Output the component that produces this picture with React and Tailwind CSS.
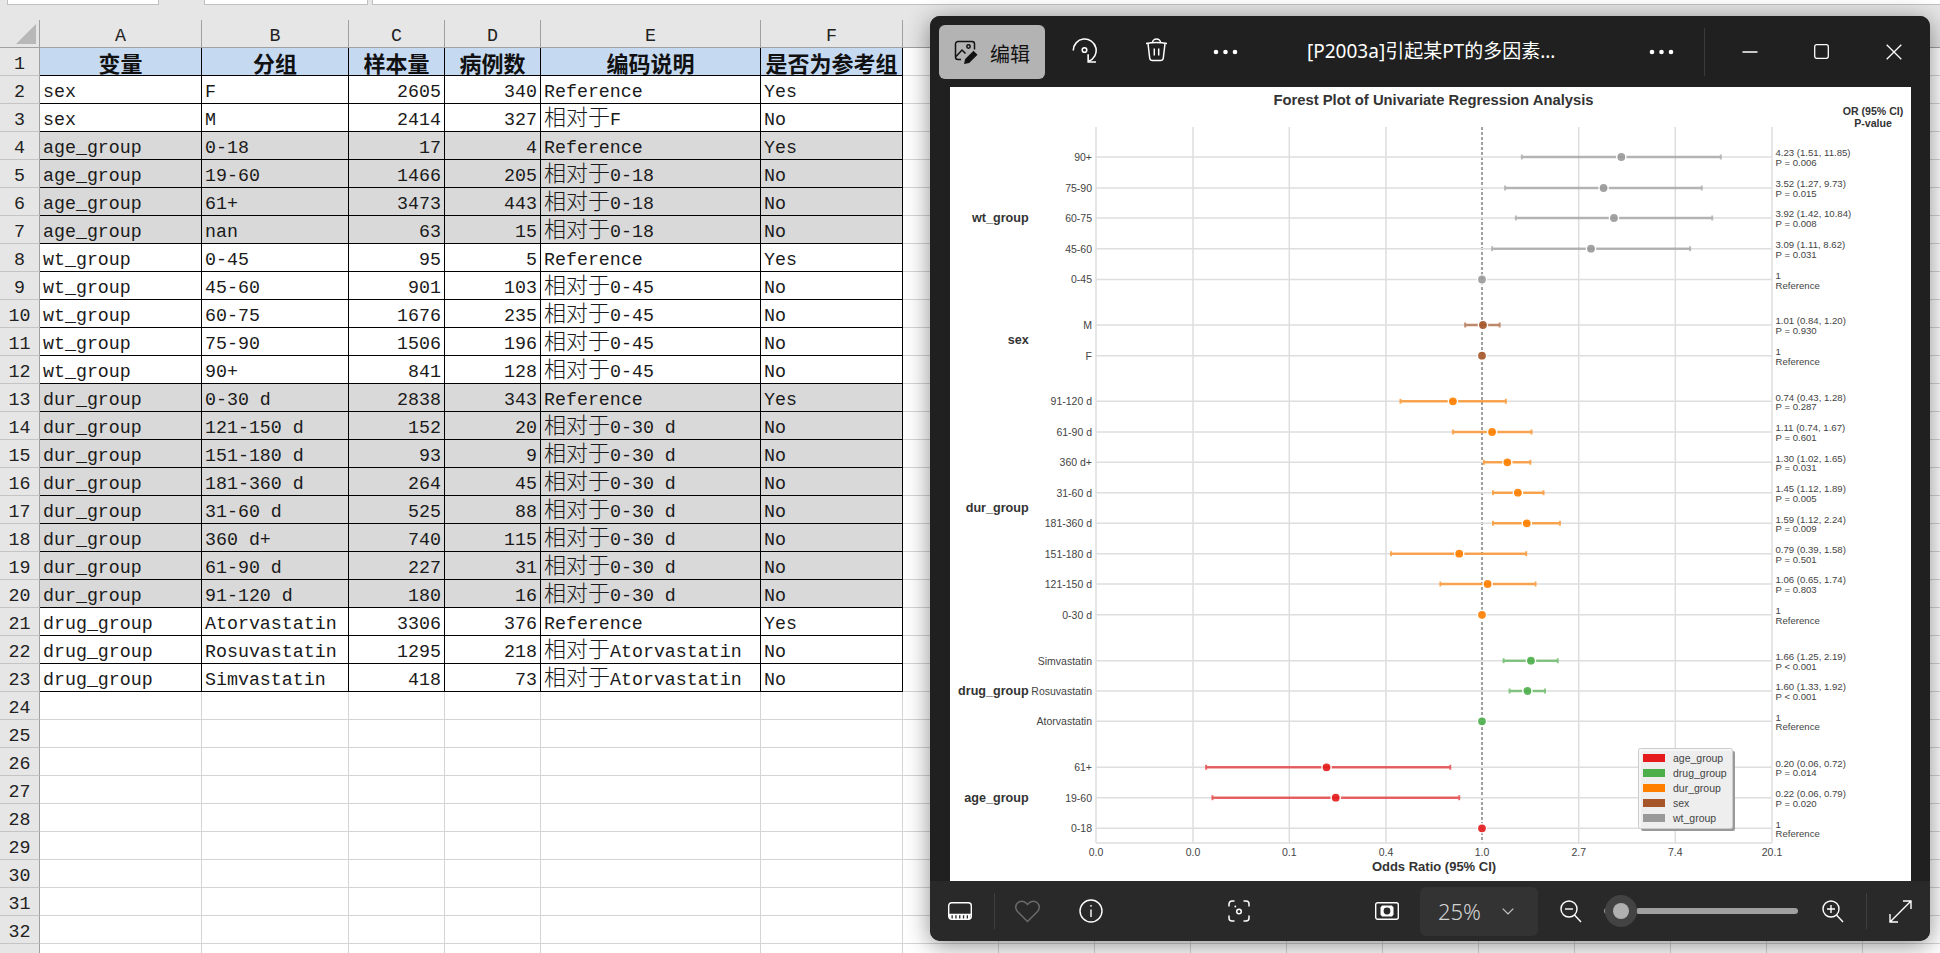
const COLS = [162, 147, 96, 96, 220, 142];
const EXTRA = Array.from({ length: 11 }, () => 96);
const LETTERS = ["A", "B", "C", "D", "E", "F"];

const HEAD = ["变量", "分组", "样本量", "病例数", "编码说明", "是否为参考组"];
const ROWS = [
  ["sex", "F", 2605, 340, "Reference", "Yes"],
  ["sex", "M", 2414, 327, "相对于F", "No"],
  ["age_group", "0-18", 17, 4, "Reference", "Yes"],
  ["age_group", "19-60", 1466, 205, "相对于0-18", "No"],
  ["age_group", "61+", 3473, 443, "相对于0-18", "No"],
  ["age_group", "nan", 63, 15, "相对于0-18", "No"],
  ["wt_group", "0-45", 95, 5, "Reference", "Yes"],
  ["wt_group", "45-60", 901, 103, "相对于0-45", "No"],
  ["wt_group", "60-75", 1676, 235, "相对于0-45", "No"],
  ["wt_group", "75-90", 1506, 196, "相对于0-45", "No"],
  ["wt_group", "90+", 841, 128, "相对于0-45", "No"],
  ["dur_group", "0-30 d", 2838, 343, "Reference", "Yes"],
  ["dur_group", "121-150 d", 152, 20, "相对于0-30 d", "No"],
  ["dur_group", "151-180 d", 93, 9, "相对于0-30 d", "No"],
  ["dur_group", "181-360 d", 264, 45, "相对于0-30 d", "No"],
  ["dur_group", "31-60 d", 525, 88, "相对于0-30 d", "No"],
  ["dur_group", "360 d+", 740, 115, "相对于0-30 d", "No"],
  ["dur_group", "61-90 d", 227, 31, "相对于0-30 d", "No"],
  ["dur_group", "91-120 d", 180, 16, "相对于0-30 d", "No"],
  ["drug_group", "Atorvastatin", 3306, 376, "Reference", "Yes"],
  ["drug_group", "Rosuvastatin", 1295, 218, "相对于Atorvastatin", "No"],
  ["drug_group", "Simvastatin", 418, 73, "相对于Atorvastatin", "No"],
];

const COLOR = { age: "#e41a1c", drug: "#4daf4a", dur: "#ff7f00", sex: "#a65628", wt: "#999999" };

// y, label, group, or, lo, hi, text, p
const PLOT = [
  [157, "90+", "wt", 4.23, 1.51, 11.85, "4.23 (1.51, 11.85)", "P = 0.006"],
  [188, "75-90", "wt", 3.52, 1.27, 9.73, "3.52 (1.27, 9.73)", "P = 0.015"],
  [218, "60-75", "wt", 3.92, 1.42, 10.84, "3.92 (1.42, 10.84)", "P = 0.008"],
  [248.7, "45-60", "wt", 3.09, 1.11, 8.62, "3.09 (1.11, 8.62)", "P = 0.031"],
  [279.5, "0-45", "wt", 1, 1, 1, "1", "Reference"],
  [325, "M", "sex", 1.01, 0.84, 1.2, "1.01 (0.84, 1.20)", "P = 0.930"],
  [355.7, "F", "sex", 1, 1, 1, "1", "Reference"],
  [401.3, "91-120 d", "dur", 0.74, 0.43, 1.28, "0.74 (0.43, 1.28)", "P = 0.287"],
  [432, "61-90 d", "dur", 1.11, 0.74, 1.67, "1.11 (0.74, 1.67)", "P = 0.601"],
  [462.3, "360 d+", "dur", 1.3, 1.02, 1.65, "1.30 (1.02, 1.65)", "P = 0.031"],
  [492.7, "31-60 d", "dur", 1.45, 1.12, 1.89, "1.45 (1.12, 1.89)", "P = 0.005"],
  [523.3, "181-360 d", "dur", 1.59, 1.12, 2.24, "1.59 (1.12, 2.24)", "P = 0.009"],
  [553.7, "151-180 d", "dur", 0.79, 0.39, 1.58, "0.79 (0.39, 1.58)", "P = 0.501"],
  [584, "121-150 d", "dur", 1.06, 0.65, 1.74, "1.06 (0.65, 1.74)", "P = 0.803"],
  [614.8, "0-30 d", "dur", 1, 1, 1, "1", "Reference"],
  [660.7, "Simvastatin", "drug", 1.66, 1.25, 2.19, "1.66 (1.25, 2.19)", "P < 0.001"],
  [691, "Rosuvastatin", "drug", 1.6, 1.33, 1.92, "1.60 (1.33, 1.92)", "P < 0.001"],
  [721.3, "Atorvastatin", "drug", 1, 1, 1, "1", "Reference"],
  [767.3, "61+", "age", 0.2, 0.0575, 0.72, "0.20 (0.06, 0.72)", "P = 0.014"],
  [797.7, "19-60", "age", 0.22, 0.0614, 0.79, "0.22 (0.06, 0.79)", "P = 0.020"],
  [828.3, "0-18", "age", 1, 1, 1, "1", "Reference"],
];

const GROUPS = [
  ["wt_group", 217.5],
  ["sex", 339],
  ["dur_group", 507],
  ["drug_group", 690.7],
  ["age_group", 797],
];

const TICKS = [
  [1096, "0.0"],
  [1193, "0.0"],
  [1289.3, "0.1"],
  [1386, "0.4"],
  [1482, "1.0"],
  [1578.7, "2.7"],
  [1675.3, "7.4"],
  [1772, "20.1"],
];

const LEGEND = [
  ["age_group", "age"],
  ["drug_group", "drug"],
  ["dur_group", "dur"],
  ["sex", "sex"],
  ["wt_group", "wt"],
];

const xOf = (or) => 1482 + 96.6 * Math.log(or);

// CJK runs get a larger size so that they stay full-width next to the mono latin
function Mixed({ text }) {
  return String(text)
    .split(/([\u4e00-\u9fff]+)/)
    .map((part, i) =>
      /[\u4e00-\u9fff]/.test(part) ? (
        <span key={i} className="font-['Noto_Sans_CJK_SC',sans-serif] text-[22px] leading-[0] font-light">
          {part}
        </span>
      ) : (
        <span key={i}>{part}</span>
      )
    );
}

function RowNumber({ n }) {
  return (
    <div className="flex h-[28px] w-[40px] shrink-0 items-end justify-center border-r border-b border-r-[#a0a0a0] border-b-[#c4c4c4] bg-[#e6e6e6] text-[18.3px] leading-[22px] text-[#222]">
      {n}
    </div>
  );
}

function DataRow({ n, row, gray }) {
  return (
    <div className="flex">
      <RowNumber n={n} />
      {row.map((value, i) => (
        <div
          key={i}
          style={{ width: COLS[i] }}
          className={`flex h-[28px] shrink-0 items-end whitespace-nowrap border-r border-b border-black text-[18.3px] leading-[21px] text-[#1a1a1a] ${
            gray ? "bg-[#d9d9d9]" : "bg-white"
          } ${i === 2 || i === 3 ? "justify-end pr-[3px]" : "pl-[3px]"}`}
        >
          <span>
            <Mixed text={value} />
          </span>
        </div>
      ))}
      {EXTRA.map((w, i) => (
        <div key={i} style={{ width: w }} className="h-[28px] shrink-0 border-r border-b border-[#d4d4d4] bg-white" />
      ))}
    </div>
  );
}

function Sheet() {
  const blank = Array.from({ length: 10 }, (_, i) => i + 24);
  return (
    <div className="h-[953px] w-[1940px] overflow-hidden bg-white font-['Liberation_Mono','Noto_Sans_CJK_SC',monospace]">
      <div className="flex h-[20px] items-start bg-[#e6e6e6]">
        <div className="ml-[7px] h-[5px] w-[152px] border-x border-b border-[#c0c0c0] bg-white" />
        <div className="ml-[45px] h-[5px] w-[164px] border-x border-b border-[#c0c0c0] bg-white" />
        <div className="ml-[4px] h-[5px] flex-1 border-l border-b border-[#c0c0c0] bg-white" />
      </div>
      <div className="flex h-[28px] bg-[#e6e6e6]">
        <div className="flex h-[28px] w-[40px] shrink-0 items-start justify-end border-r border-b border-[#a0a0a0] pt-[4px] pr-[3px]">
          <svg width="20" height="20" viewBox="0 0 20 20">
            <polygon points="0,20 20,20 20,0" fill="#b8b8b8" />
          </svg>
        </div>
        {COLS.map((w, i) => (
          <div
            key={i}
            style={{ width: w }}
            className="flex h-[28px] shrink-0 items-end justify-center border-r border-b border-[#a0a0a0] text-[18.3px] leading-[22px] text-[#222]"
          >
            {LETTERS[i]}
          </div>
        ))}
        {EXTRA.map((w, i) => (
          <div key={i} style={{ width: w }} className="h-[28px] shrink-0 border-b border-[#a0a0a0]" />
        ))}
      </div>
      <div className="flex">
        <RowNumber n={1} />
        {HEAD.map((h, i) => (
          <div
            key={i}
            style={{ width: COLS[i] }}
            className="flex h-[28px] shrink-0 items-center justify-center border-r border-b border-black bg-[#c5d9f1] font-['Noto_Sans_CJK_SC',sans-serif] text-[22px] leading-[26px] font-bold whitespace-nowrap text-[#111]"
          >
            {h}
          </div>
        ))}
        {EXTRA.map((w, i) => (
          <div key={i} style={{ width: w }} className="h-[28px] shrink-0 border-r border-b border-[#d4d4d4] bg-white" />
        ))}
      </div>
      {ROWS.map((row, i) => (
        <DataRow key={i} n={i + 2} row={row} gray={row[0] === "age_group" || row[0] === "dur_group"} />
      ))}
      {blank.map((n) => (
        <div key={n} className="flex">
          <RowNumber n={n} />
          {[...COLS, ...EXTRA].map((w, i) => (
            <div key={i} style={{ width: w }} className="h-[28px] shrink-0 border-r border-b border-[#d4d4d4] bg-white" />
          ))}
        </div>
      ))}
    </div>
  );
}

function ForestPlot() {
  const sans = "'Liberation Sans', Arial, sans-serif";
  return (
    <svg className="block h-[794px] w-[961px]" viewBox="950 87 961 794" fontFamily={sans}>
      <rect x="950" y="87" width="961" height="794" fill="#fff" />
      <text x="1433.5" y="105" textAnchor="middle" fontSize="14.8" fontWeight="700" fill="#333">
        Forest Plot of Univariate Regression Analysis
      </text>
      <text x="1873" y="115" textAnchor="middle" fontSize="10.6" fontWeight="700" fill="#333">
        OR (95% CI)
      </text>
      <text x="1873" y="127" textAnchor="middle" fontSize="10.6" fontWeight="700" fill="#333">
        P-value
      </text>

      {TICKS.map(([x, label]) => (
        <g key={x}>
          <line
            x1={x}
            x2={x}
            y1="127"
            y2="843"
            stroke={label === "1.0" ? "#444" : "#dedede"}
            strokeWidth={label === "1.0" ? 1 : 1.5}
            strokeDasharray={label === "1.0" ? "3 2" : undefined}
          />
          <text x={x} y="855.5" textAnchor="middle" fontSize="10.5" fill="#444">
            {label}
          </text>
        </g>
      ))}
      <line x1="1096" x2="1772" y1="843" y2="843" stroke="#dedede" strokeWidth="1.5" />
      <text x="1434" y="871" textAnchor="middle" fontSize="13" fontWeight="700" fill="#333">
        Odds Ratio (95% CI)
      </text>

      {GROUPS.map(([label, y]) => (
        <text key={label} x="1028.7" y={y + 4.5} textAnchor="end" fontSize="12.6" fontWeight="700" fill="#333">
          {label}
        </text>
      ))}

      {PLOT.map(([y, label, group, or, lo, hi, text, p]) => {
        const color = COLOR[group];
        return (
          <g key={label}>
            <line x1="1096" x2="1772" y1={y} y2={y} stroke="#dedede" strokeWidth="1.5" />
            {or !== 1 || lo !== 1 ? (
              <g stroke={color} opacity="0.65">
                <line x1={xOf(lo)} x2={xOf(hi)} y1={y} y2={y} strokeWidth="2.5" />
                <line x1={xOf(lo)} x2={xOf(lo)} y1={y - 2.5} y2={y + 2.5} strokeWidth="2" />
                <line x1={xOf(hi)} x2={xOf(hi)} y1={y - 2.5} y2={y + 2.5} strokeWidth="2" />
              </g>
            ) : null}
            <circle cx={xOf(or)} cy={y} r="4.6" fill={color} fillOpacity="0.9" stroke="#fff" strokeWidth="1.4" />
            <text x="1092" y={y + 3.8} textAnchor="end" fontSize="10.5" fill="#444">
              {label}
            </text>
            <text x="1775.5" y={y - 0.7} fontSize="9.6" fill="#444">
              {text}
            </text>
            <text x="1775.5" y={y + 9} fontSize="9.6" fill="#444">
              {p}
            </text>
          </g>
        );
      })}

      <rect x="1641" y="751" width="94" height="80" rx="2" fill="#999" />
      <rect x="1638.5" y="748.5" width="94" height="80" rx="2" fill="#f5f5f5" fillOpacity="0.92" stroke="#ccc" />
      {LEGEND.map(([label, key], i) => (
        <g key={label}>
          <rect x="1643" y={754 + i * 15} width="22" height="8" fill={COLOR[key]} />
          <text x="1673" y={762 + i * 15} fontSize="10.5" fill="#444">
            {label}
          </text>
        </g>
      ))}
    </svg>
  );
}

function Dots() {
  return (
    <svg width="25" height="6" viewBox="0 0 25 6" fill="#fff">
      <circle cx="3" cy="3" r="2.3" />
      <circle cx="12.5" cy="3" r="2.3" />
      <circle cx="22" cy="3" r="2.3" />
    </svg>
  );
}

function TopBar() {
  return (
    <div className="flex h-[71px] shrink-0 items-center bg-[#202020] pl-[9px] text-white">
      <div className="flex h-[54px] w-[106px] items-center rounded-[6px] bg-[#b3b3b3] pl-[15px] text-[#111]">
        <svg className="mt-[2px]" width="26" height="25" viewBox="0 0 26 25" fill="none" stroke="#111" strokeWidth="1.5">
          <path d="M20.5 9.5V4A2.5 2.5 0 0 0 18 1.5H4A2.5 2.5 0 0 0 1.5 4V17A2.5 2.5 0 0 0 4 19.5H7" />
          <path d="M2 16.5l6-6.5 3.5 3.5" />
          <circle cx="14.5" cy="6.5" r="1.7" />
          <path d="M10 24l1.2-5 8.3-8.3 4 4-8.3 8.3z" fill="#111" stroke="none" />
        </svg>
        <span className="mt-[4px] ml-[10px] font-['Noto_Sans_CJK_SC',sans-serif] text-[20px] leading-none">编辑</span>
      </div>
      <svg className="mb-[3px] ml-[27px]" width="25" height="25" viewBox="0 0 24 24" fill="none" stroke="#fff" strokeWidth="1.5">
        <path d="M1.2 12A11 11 0 1 1 16 22.3" />
        <path d="M23 23H15.5V15.7" />
        <circle cx="12" cy="11.5" r="2.2" />
      </svg>
      <svg className="mb-[3px] ml-[48px]" width="23" height="24" viewBox="0 0 23 24" fill="none" stroke="#fff" strokeWidth="1.5">
        <path d="M1 5.5C7 4.3 16 4.3 22 5.5" />
        <path d="M7.5 4.5a4 3.5 0 0 1 8 0" />
        <path d="M3 5.5L4.7 20a3 3 0 0 0 3 2.6h7.6a3 3 0 0 0 3-2.6L20 5.5" />
        <path d="M9.3 10.5v7M13.7 10.5v7" />
      </svg>
      <div className="ml-[45px]">
        <Dots />
      </div>
      <span className="ml-[69px] w-[342px] font-['Noto_Sans','Noto_Sans_CJK_SC',sans-serif] text-[19px] whitespace-nowrap">
        [P2003a]引起某PT的多因素...
      </span>
      <Dots />
      <div className="ml-[30px] h-[48px] w-px bg-[#3a3a3a]" />
      <svg className="ml-[37px]" width="16" height="16" viewBox="0 0 16 16" stroke="#fff" strokeWidth="1.3">
        <path d="M0.5 8H15.5" />
      </svg>
      <svg className="ml-[56px]" width="15" height="15" viewBox="0 0 15 15" fill="none" stroke="#fff" strokeWidth="1.3">
        <rect x="0.7" y="0.7" width="13.6" height="13.6" rx="2" />
      </svg>
      <svg className="ml-[57px]" width="16" height="16" viewBox="0 0 16 16" stroke="#fff" strokeWidth="1.3">
        <path d="M0.7 0.7L15.3 15.3M15.3 0.7L0.7 15.3" />
      </svg>
    </div>
  );
}

function BottomBar() {
  return (
    <div className="flex h-[60px] shrink-0 items-center rounded-b-[10px] bg-[#292929] pl-[18px] text-white">
      <svg width="24" height="18" viewBox="0 0 24 18" fill="none" stroke="#fff" strokeWidth="1.4">
        <rect x="0.7" y="0.7" width="22.6" height="16.6" rx="3" />
        <path d="M1 12.5H23" />
        <path d="M1 15H23" strokeWidth="4" strokeDasharray="2.5 1.3" />
      </svg>
      <div className="ml-[22px] h-[36px] w-px bg-[#3f3f3f]" />
      <svg className="ml-[20px]" width="25" height="23" viewBox="0 0 25 23" fill="none" stroke="#6a6a6a" strokeWidth="1.5">
        <path d="M12.5 21.5L2.5 11.5A6 6 0 0 1 11 3L12.5 4.5L14 3A6 6 0 0 1 22.5 11.5Z" />
      </svg>
      <svg className="ml-[39px]" width="24" height="24" viewBox="0 0 24 24" fill="none" stroke="#fff" strokeWidth="1.4">
        <circle cx="12" cy="12" r="11" />
        <path d="M12 10.5V18" />
        <circle cx="12" cy="6.8" r="0.9" fill="#fff" stroke="none" />
      </svg>
      <svg className="ml-[125px]" width="22" height="22" viewBox="0 0 22 22" fill="none" stroke="#fff" strokeWidth="1.5">
        <path d="M1 6.5V4A3 3 0 0 1 4 1H6.5M15.5 1H18A3 3 0 0 1 21 4V6.5M21 15.5V18A3 3 0 0 1 18 21H15.5M6.5 21H4A3 3 0 0 1 1 18V15.5" />
        <circle cx="11" cy="11.5" r="2.3" />
        <circle cx="7.3" cy="6.5" r="0.9" fill="#fff" stroke="none" />
      </svg>
      <svg className="ml-[125px]" width="24" height="18" viewBox="0 0 24 18" fill="none" stroke="#fff" strokeWidth="1.4">
        <rect x="0.7" y="0.7" width="22.6" height="16.6" rx="2" />
        <path d="M7 3.5H17L18.5 5.5V12.5L17 14.5H7L5.5 12.5V5.5Z" fill="#fff" stroke="none" />
        <circle cx="12" cy="9" r="3.4" fill="#292929" stroke="none" />
      </svg>
      <div className="ml-[21px] flex h-[49px] w-[118px] items-center rounded-[6px] bg-[#333333] pl-[18px]">
        <span className="font-['Noto_Sans',sans-serif] text-[22px] leading-none font-light text-[#d4d4d4]">25%</span>
        <svg className="ml-[21px]" width="12" height="7" viewBox="0 0 12 7" fill="none" stroke="#c8c8c8" strokeWidth="1.2">
          <path d="M0.7 0.7L6 6L11.3 0.7" />
        </svg>
      </div>
      <svg className="ml-[22px]" width="22" height="23" viewBox="0 0 22 23" fill="none" stroke="#fff" strokeWidth="1.4">
        <circle cx="9" cy="9" r="8" />
        <path d="M14.5 15L21 22" />
        <path d="M5 9H13" />
      </svg>
      <div className="relative ml-[22px] flex h-[32px] w-[194px] items-center">
        <div className="h-[6px] w-[4px] rounded-l-full bg-[#999]" />
        <div className="ml-[28px] h-[6px] flex-1 rounded-full bg-[#a0a0a0]" />
        <div className="absolute left-[1px] flex h-[32px] w-[32px] items-center justify-center rounded-full bg-[#434343]">
          <div className="h-[16px] w-[16px] rounded-full bg-[#b0b0b0]" />
        </div>
      </div>
      <svg className="ml-[24px]" width="22" height="23" viewBox="0 0 22 23" fill="none" stroke="#fff" strokeWidth="1.4">
        <circle cx="9" cy="9" r="8" />
        <path d="M14.5 15L21 22" />
        <path d="M5 9H13M9 5V13" />
      </svg>
      <div className="ml-[22px] h-[36px] w-px bg-[#3f3f3f]" />
      <svg className="ml-[22px]" width="23" height="23" viewBox="0 0 23 23" fill="none" stroke="#fff" strokeWidth="1.4">
        <path d="M14 1H22V9M22 1L1 22M1 14V22H9" />
      </svg>
    </div>
  );
}

function PhotoWindow() {
  return (
    <div className="absolute top-[16px] left-[930px] flex h-[925px] w-[1000px] flex-col overflow-hidden rounded-[10px] bg-[#202020] shadow-[0_4px_24px_rgba(0,0,0,0.45)]">
      <TopBar />
      <div className="flex h-[794px] shrink-0 pl-[20px]">
        <ForestPlot />
      </div>
      <BottomBar />
    </div>
  );
}

export default function App() {
  return (
    <div className="relative h-[953px] w-[1940px] overflow-hidden">
      <Sheet />
      <PhotoWindow />
    </div>
  );
}
